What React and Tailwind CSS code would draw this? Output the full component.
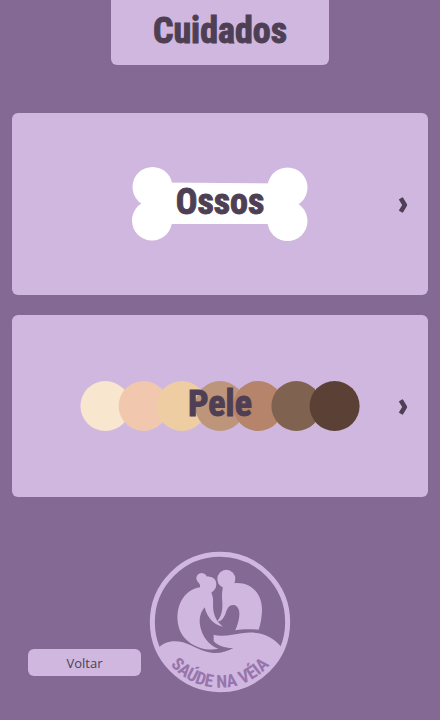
const display =
  "font-['Roboto_Condensed','Open_Sans_Condensed','Liberation_Sans_Narrow','DejaVu_Sans_Condensed',sans-serif] font-bold text-[#4e3f55] [-webkit-text-stroke:1px_#4e3f55]";

const skinTones = ["#f9e6cf", "#f1c8ae", "#efcda3", "#bd957a", "#b5846a", "#7f624f", "#5a4035"];

function Bone() {
  return (
    <svg className="block h-[74px] w-[176px]" viewBox="0 0 176 74" fill="#fff" aria-hidden="true">
      <path d="M30 15.500 146 16.500V57H30Z" />
      <path d="M10 37 20 24H156L166 37 156 50H20Z" />
      <circle cx="20.500" cy="20" r="20" />
      <circle cx="20" cy="53.500" r="20" />
      <circle cx="155.500" cy="20.500" r="20" />
      <circle cx="155.500" cy="54" r="20" />
    </svg>
  );
}

function SkinTones() {
  return (
    <svg className="block h-[52px] w-[280px]" viewBox="0 0 280 52" aria-hidden="true">
      {skinTones.map((tone, i) => (
        <circle key={tone} cx={25.4 + i * 38.2} cy="26" r="25" fill={tone} />
      ))}
    </svg>
  );
}

function Card({ label, children }) {
  return (
    <a href="#" className="relative flex h-[182px] items-center justify-center rounded-md bg-[#cfb7df]">
      {children}
      <span className={`${display} absolute inset-0 flex items-center justify-center pb-1 text-[36px] leading-none`}>
        {label}
      </span>
      <svg className="absolute right-5 h-5 w-[10px]" viewBox="0 -3 10 20" fill="#4e3f55" aria-hidden="true">
        <path d="M.8 2.400 4 .4Q4.800.2 5.400 1.300L9 7.200Q9.400 8 9 8.800L5.400 14.700Q4.800 15.800 4 15.600L.8 13.600 4.200 8Z" />
      </svg>
    </a>
  );
}

function Logo() {
  return (
    <svg className="block h-[150px] w-[150px]" viewBox="0 0 450 450" role="img" aria-label="Saúde na Véia">
      <circle cx="225" cy="228" r="203" fill="none" stroke="#cfb7df" strokeWidth="15" />
      <g fill="#cfb7df">
        <path d="M38 308C55 287 86 281 114 289C148 300 169 318 204 321C229 322 249 315 265 306C243 307 218 300 206 285V266C231 273 263 267 290 262C343 253 387 271 414 310A207 207 0 0 1 38 308Z" />
        <circle cx="170" cy="97" r="16" />
        <circle cx="192" cy="114" r="22" />
        <path d="M160 108 180 94 200 120 180 132 166 128Q168 117 160 108Z" />
        <path d="M176 93C190 88 210 95 213 111C215 123 209 134 199 140C207 155 203 174 205 193C208 214 219 231 234 242C208 238 187 217 179 184C166 199 161 219 166 242C172 271 191 297 220 308C172 319 113 291 101 242C87 185 116 130 166 124C166 108 165 97 176 93Z" />
        <ellipse cx="244" cy="99" rx="27" ry="28" />
        <path d="M234 121C245 115 260 111 276 111C325 111 352 149 351 194C350 214 347 234 341 251C316 249 290 249 271 253C279 233 284 215 283 200C281 178 266 172 253 181C242 191 243 209 233 218C228 224 222 227 217 226C238 200 231 169 231 148C231 137 233 129 234 121Z" />
      </g>
      <path id="motto-arc" d="M28 228A197 197 0 0 0 422 228" fill="none" />
      <text
        className="font-['Roboto_Condensed','Open_Sans_Condensed','Liberation_Sans_Narrow','DejaVu_Sans_Condensed',sans-serif] text-[53px] font-bold"
        fill="#9874ad"
        textAnchor="middle"
      >
        <textPath href="#motto-arc" startOffset="50%">SAÚDE NA VÉIA</textPath>
      </text>
    </svg>
  );
}

export default function App() {
  return (
    <div className="flex min-h-screen flex-col bg-[#846994]">
      <header className="mx-auto flex h-[65px] w-[218px] items-center justify-center rounded-b-md bg-[#cfb7df]">
        <h1 className={`${display} pb-1 text-[36px] leading-none`}>Cuidados</h1>
      </header>
      <main className="mt-12 flex flex-col gap-5 px-3">
        <Card label="Ossos">
          <Bone />
        </Card>
        <Card label="Pele">
          <SkinTones />
        </Card>
      </main>
      <footer className="mt-auto grid grid-cols-[1fr_150px_1fr] items-end pb-6">
        <button type="button" className="mr-1 mb-5 ml-7 h-[27px] rounded-md bg-[#cfb7df] pt-[2px] font-['Open_Sans',sans-serif] text-[13px] text-[#4e3f55]">
          Voltar
        </button>
        <Logo />
      </footer>
    </div>
  );
}
